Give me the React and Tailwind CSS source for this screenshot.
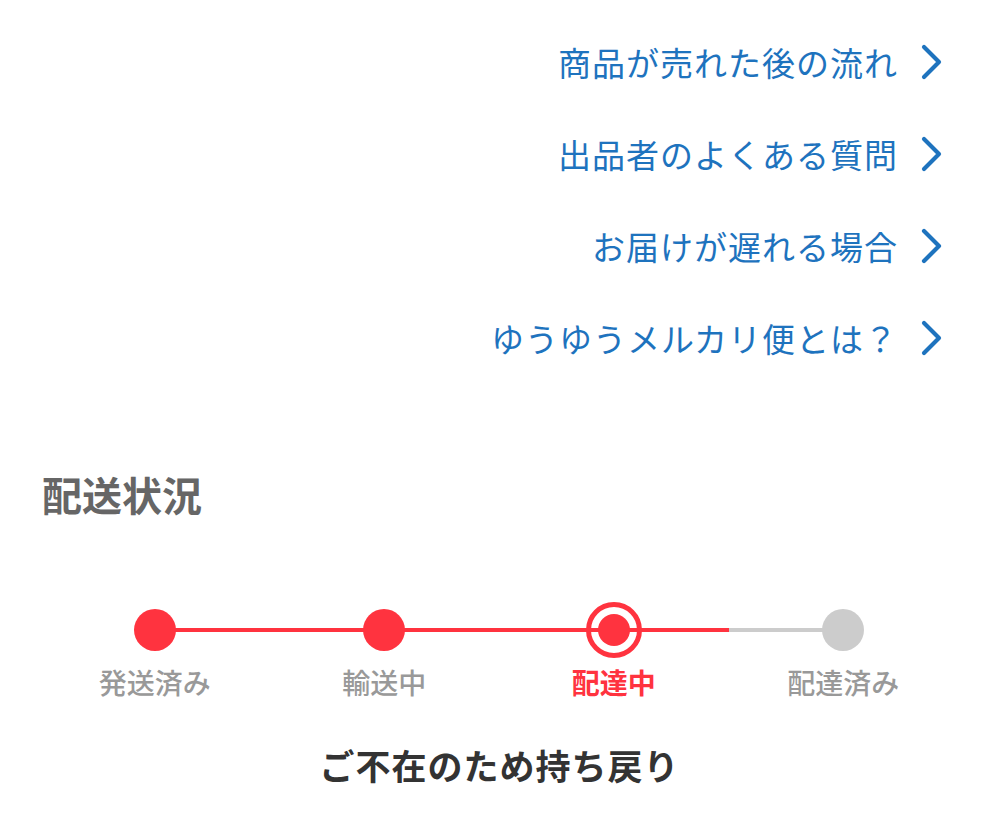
import React from "react";

const font = { fontFamily: '"Noto Sans CJK JP", "Noto Sans", sans-serif' };

function Chevron() {
  return (
    <svg width="24" height="36" viewBox="0 0 24 36" className="shrink-0">
      <path d="M4 3 L19 18 L4 33" fill="none" stroke="#1e73be" strokeWidth="4.2" strokeLinecap="round" strokeLinejoin="round" />
    </svg>
  );
}

const links = ["商品が売れた後の流れ", "出品者のよくある質問", "お届けが遅れる場合", "ゆうゆうメルカリ便とは？"];

const steps = [
  { label: "発送済み", left: null, right: "red", dot: "done" },
  { label: "輸送中", left: "red", right: "red", dot: "done" },
  { label: "配達中", left: "red", right: "red", dot: "current" },
  { label: "配達済み", left: "gray", right: null, dot: "todo" },
];

function Seg({ c }) {
  const cls = c === "red" ? "bg-[#ff333f]" : c === "gray" ? "bg-[#cccccc]" : "bg-transparent";
  return <div className={`flex-1 h-[4px] ${cls}`} />;
}

function Dot({ kind }) {
  if (kind === "current") {
    return (
      <div className="absolute left-1/2 top-1/2 -translate-x-1/2 -translate-y-1/2 w-[56px] h-[56px] rounded-full border-[5px] border-[#ff333f] flex items-center justify-center">
        <div className="w-[32px] h-[32px] rounded-full bg-[#ff333f]" />
      </div>
    );
  }
  const cls = kind === "done" ? "bg-[#ff333f]" : "bg-[#cccccc]";
  return <div className={`absolute left-1/2 top-1/2 -translate-x-1/2 -translate-y-1/2 w-[42px] h-[42px] rounded-full ${cls}`} />;
}

export default function App() {
  return (
    <div className="w-[999px] h-[832px] bg-white overflow-hidden" style={font}>
      <div className="pt-[16px] pr-[55px] flex flex-col">
        {links.map((t) => (
          <div key={t} className="h-[92px] flex items-center justify-end gap-[22px]">
            <span className="text-[33px] leading-[40px] text-[#1e73be] tracking-[1px]">{t}</span>
            <Chevron />
          </div>
        ))}
      </div>
      <div className="mt-[90px] pl-[42px] text-[40px] leading-[40px] font-bold text-[#666666]">配送状況</div>
      <div className="mt-[86px] mx-[40px] grid grid-cols-4 w-[918px]">
        {steps.map((s) => (
          <div key={s.label} className="flex flex-col items-center">
            <div className="relative w-full h-[60px] flex items-center">
              <Seg c={s.left} />
              <Seg c={s.right} />
              <Dot kind={s.dot} />
            </div>
            <div
              className={`mt-[6px] text-[28px] leading-[32px] ${
                s.dot === "current" ? "text-[#ff333f] font-bold" : "text-[#999999] font-medium"
              }`}
            >
              {s.label}
            </div>
          </div>
        ))}
      </div>
      <div className="mt-[47px] text-center text-[35px] leading-[40px] font-bold text-[#333333] tracking-[1px]">ご不在のため持ち戻り</div>
    </div>
  );
}
